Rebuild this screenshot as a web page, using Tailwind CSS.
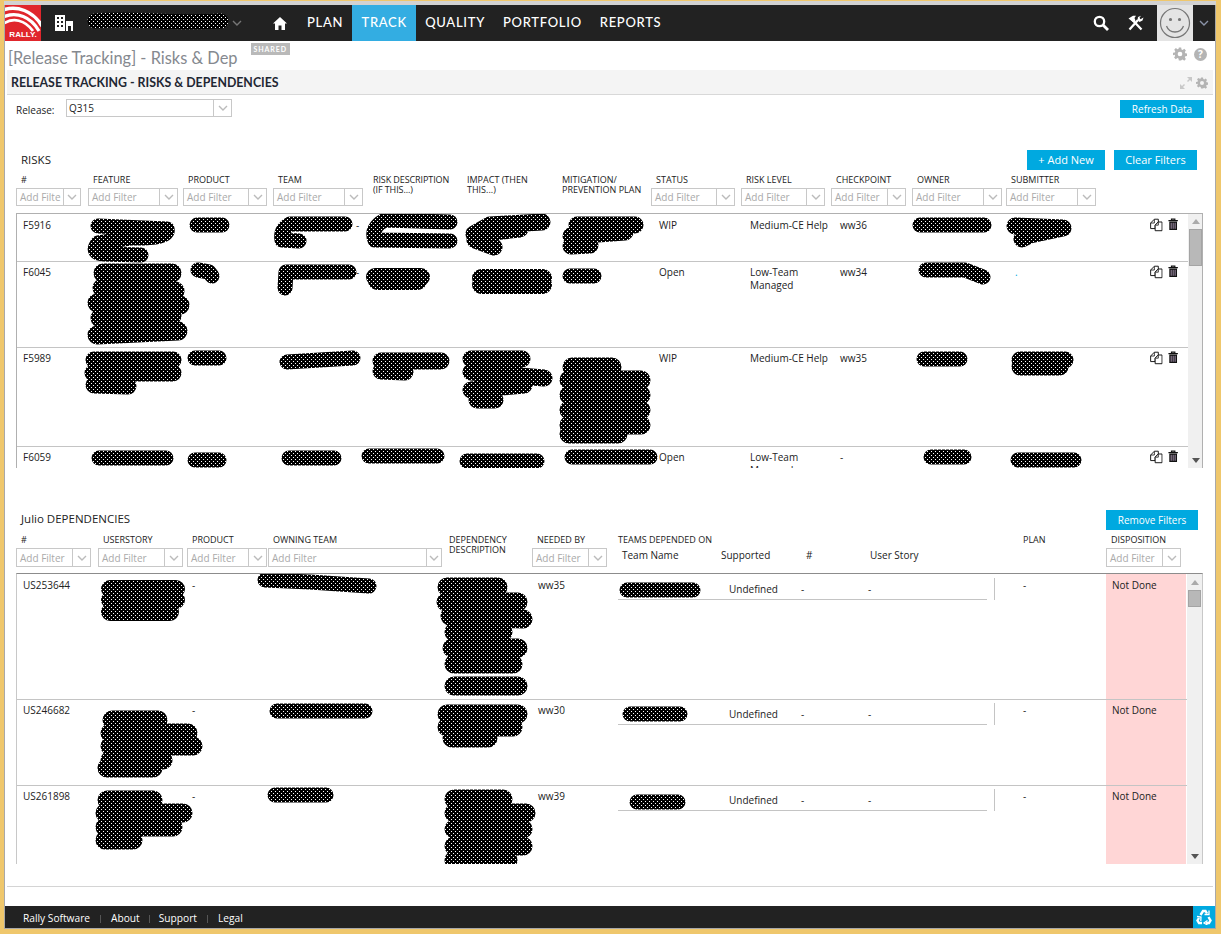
<!DOCTYPE html>
<html>
<head>
<meta charset="utf-8">
<script src="https://cdn.jsdelivr.net/npm/@tailwindcss/browser@4"></script>
</head>
<body class="m-0 overflow-hidden bg-[#efc76c]">
<svg class="absolute w-0 h-0">
  <defs>
    <symbol id="chev" viewBox="0 0 10 6"><path d="M1 1l4 4 4-4" fill="none" stroke="currentColor" stroke-width="1.4"/></symbol>
    <symbol id="gear" viewBox="0 0 24 24"><path fill="currentColor" fill-rule="evenodd" d="M10 1h4l.6 3.200 2 .8L19.300 3.200l2.800 2.800-1.800 2.700.8 2 3.200.6v4l-3.200.6-.8 2 1.800 2.700-2.800 2.800-2.700-1.800-2 .8L14 23h-4l-.6-3.200-2-.8-2.700 1.800-2.800-2.800 1.800-2.700-.8-2L-.1 14v-4l3.200-.6.8-2L2.100 4.700 4.900 1.900l2.700 1.800 2-.8zM12 8a4 4 0 1 0 0 8 4 4 0 0 0 0-8z"/></symbol>
    <symbol id="copy" viewBox="0 0 16 16"><path d="M5.500.7h5v3.500L6.500 8v4.500H.8V5.500z" fill="#fff" stroke="#111" stroke-width="1.200" stroke-linejoin="round"/><path d="M10.500 4.200h4.700v11H6.500V8.200z" fill="#fff" stroke="#111" stroke-width="1.200" stroke-linejoin="round"/><path d="M10.500 4.500v3.700H6.800M5.500 1v4.500H1" fill="none" stroke="#111" stroke-width="1"/></symbol>
    <symbol id="trash" viewBox="0 0 12 14"><path d="M.5 2.500h11M4 2.500V.8h4v1.700" fill="none" stroke="#111" stroke-width="1.300"/><path d="M1.500 3.500h9v10h-9z" fill="#111"/><path d="M3.700 5v7M6 5v7M8.300 5v7" stroke="#b9a3c2" stroke-width="1"/></symbol>
    <symbol id="up" viewBox="0 0 8 5"><path d="M0 5l4-5 4 5z" fill="currentColor"/></symbol>
    <symbol id="down" viewBox="0 0 8 5"><path d="M0 0l4 5 4-5z" fill="currentColor"/></symbol>
  </defs>
</svg>

<div class="relative w-[1221px] h-[934px] overflow-hidden bg-[#efc76c] pt-px pl-[4px] pr-[5px] pb-[5px] font-['Open_Sans',sans-serif] text-[10px] text-[#222]">
  <div class="h-full border-x border-b border-[#a8a8a8] bg-white flex flex-col">
    <div class="h-[4px] bg-[#d2d2d2] -mx-px shrink-0"></div>

    <!-- nav -->
    <nav class="h-[36px] shrink-0 bg-[#222] flex items-center text-white font-['Lato',sans-serif] text-[13px] font-medium tracking-[0.7px]">
      <div class="relative w-[36px] h-[36px] bg-[#e0262c] overflow-hidden shrink-0">
        <svg class="absolute inset-0" width="36" height="36" viewBox="0 0 36 36" fill="none" stroke="#fff"><path d="M-2 5C12 0 28 6 37 21" stroke-width="3.500"/><path d="M-2 12C12 6 26 12 34 26" stroke-width="3.200"/><path d="M-2 19C8 12 20 15 28 26" stroke-width="2.800"/></svg>
        <span class="absolute left-0 right-0 bottom-[1px] text-center text-[8px] leading-[10px] font-black tracking-[0px] font-['Liberation_Sans',sans-serif]">RALLY.</span>
      </div>
      <svg class="ml-[14px] shrink-0" width="18" height="18" viewBox="0 0 18 18"><path fill="#fff" d="M0 1h10v16H0zM11 7h7v10h-2v-5h-3v5h-2z"/><path fill="#222" d="M2 3h2v2H2zM6 3h2v2H6zM2 7h2v2H2zM6 7h2v2H6zM2 11h2v2H2zM6 11h2v2H6z"/></svg>
      <div class="w-[153px] shrink-0"></div>
      <svg class="ml-[6px] text-[#777] shrink-0" width="10" height="6"><use href="#chev"/></svg>
      <svg class="ml-[31px] shrink-0" width="14" height="13" viewBox="0 0 14 13"><path fill="#fff" d="M7 0l7 6.500h-2V13H8.500V8.500h-3V13H2V6.500H0z"/></svg>
      <span class="ml-[20px] -mt-px">PLAN</span>
      <span class="ml-[9px] w-[64px] h-full bg-[#33ade2] flex items-center justify-center pb-px">TRACK</span>
      <span class="ml-[9px] -mt-px">QUALITY</span>
      <span class="ml-[18px] -mt-px">PORTFOLIO</span>
      <span class="ml-[18px] -mt-px">REPORTS</span>
      <div class="flex-1"></div>
      <svg width="16" height="16" viewBox="0 0 16 16"><circle cx="6.500" cy="6.500" r="4.700" fill="none" stroke="#fff" stroke-width="2.300"/><path d="M10 10l5 5" stroke="#fff" stroke-width="2.800"/></svg>
      <svg class="ml-[18px]" width="17" height="16" viewBox="0 0 17 16"><path d="M2.500 14.500L11 5M14.500 14.500L5 4.500" stroke="#fff" stroke-width="2.300" fill="none"/><path d="M1.500 3.500L6 .8h3L7.500 3 8.500 5.500 6.500 7.500zM16.500 2.500l-1 3-3 1.500-2-2 .5-3 3-1.300-1.500 2 1 1.500z" fill="#fff"/></svg>
      <div class="ml-[13px] w-[36px] h-[36px] bg-[#e4e4e4] flex items-center justify-center shrink-0">
        <svg width="32" height="32" viewBox="0 0 32 32" fill="none" stroke="#777" stroke-width="1.200"><circle cx="16" cy="16" r="14.500"/><path d="M7.500 19c3 8 14 8 17 0" stroke-width="1.300"/><circle cx="11.500" cy="12.500" r="1" fill="#777"/><circle cx="20.500" cy="12.500" r="1" fill="#777"/></svg>
      </div>
      <svg class="ml-[6px] mr-[6px] text-[#8a93a8] shrink-0" width="10" height="6"><use href="#chev"/></svg>
    </nav>

    <!-- title -->
    <div class="h-[29px] shrink-0 flex items-start pl-[3px] pr-[8px]">
      <span class="mt-[7px] font-['Lato',sans-serif] text-[16.400px] leading-[20px] text-[#85898f] whitespace-nowrap">[Release Tracking] - Risks &amp; Dep</span>
      <span class="ml-[13px] mt-[2px] h-[12px] px-[3px] bg-[#b9b9b9] text-white text-[7px] leading-[12px] font-bold tracking-[0.9px] font-['Lato',sans-serif]">SHARED</span>
      <div class="flex-1"></div>
      <svg class="mt-[6px] text-[#b4b4b4]" width="14" height="14"><use href="#gear"/></svg>
      <span class="ml-[7px] mt-[7px] w-[13px] h-[13px] rounded-full bg-[#b4b4b4] text-white text-[10px] leading-[13px] font-bold text-center">?</span>
    </div>

    <!-- panel header -->
    <div class="mx-[2px] h-[25px] shrink-0 bg-[#f4f4f4] border-b border-[#d8d8d8] flex items-center pl-[4px] pr-[5px] pt-[2px]">
      <span class="font-['Lato',sans-serif] text-[12.350px] font-bold text-[#1f2733] whitespace-nowrap">RELEASE TRACKING - RISKS &amp; DEPENDENCIES</span>
      <div class="flex-1"></div>
      <svg width="12" height="12" viewBox="0 0 12 12" class="text-[#c8c8c8]"><path fill="currentColor" d="M7 0h5v5l-2-2-2 2-1-1 2-2zM5 12H0V7l2 2 2-2 1 1-2 2z"/></svg>
      <svg class="ml-[4px] text-[#b4b4b4]" width="12" height="12"><use href="#gear"/></svg>
    </div>

    <!-- release row -->
    <div class="h-[55px] shrink-0 flex items-start pl-[11px] pr-[11px]">
      <span class="mt-[8px] w-[50px] text-[10px] leading-[14px]">Release:</span>
      <div class="mt-[4px] w-[166px] h-[18px] border border-[#c8c8c8] flex items-center">
        <span class="flex-1 pl-[2px] text-[10px]">Q315</span>
        <span class="w-[18px] h-full border-l border-[#c8c8c8] flex items-center justify-center text-[#bbb]"><svg width="10" height="6"><use href="#chev"/></svg></span>
      </div>
      <div class="flex-1"></div>
      <button class="mt-[5px] w-[84px] h-[18px] bg-[#00a9e0] text-white text-[10px] font-medium">Refresh Data</button>
    </div>

    <!-- risks header -->
    <div class="h-[22px] shrink-0 flex items-start pl-[16px] pr-[18px]">
      <span class="mt-[2px] text-[11.500px] leading-[16px] text-[#222]">RISKS</span>
      <div class="flex-1"></div>
      <button class="w-[78px] h-[20px] bg-[#00a9e0] text-white text-[11px] font-medium">+ Add New</button>
      <button class="ml-[9px] w-[83px] h-[20px] bg-[#00a9e0] text-white text-[11px] font-medium">Clear Filters</button>
    </div>

    <!-- risks column heads -->
    <div class="h-[41px] shrink-0 pl-[11px] grid grid-cols-[72px_95px_90px_95px_94px_95px_94px_90px_90px_81px_94px_90px] text-[9px] leading-[10px] text-[#222] font-medium">
      <div class="flex flex-col pl-[5px]"><span class="mt-[3px] h-[13px]">#</span><div class="w-[65px] -ml-[5px] h-[18px] border border-[#c8c8c8] flex items-center text-[10px] text-[#aaa]"><span class="flex-1 pl-[3px] w-0 overflow-hidden whitespace-nowrap">Add Filte</span><span class="w-[17px] shrink-0 h-full border-l border-[#c8c8c8] flex items-center justify-center text-[#bbb]"><svg width="10" height="6"><use href="#chev"/></svg></span></div></div>
      <div class="flex flex-col pl-[5px]"><span class="mt-[3px] h-[13px]">FEATURE</span><div class="w-[90px] -ml-[5px] h-[18px] border border-[#c8c8c8] flex items-center text-[10px] text-[#aaa]"><span class="flex-1 pl-[3px]">Add Filter</span><span class="w-[18px] h-full border-l border-[#c8c8c8] flex items-center justify-center text-[#bbb]"><svg width="10" height="6"><use href="#chev"/></svg></span></div></div>
      <div class="flex flex-col pl-[5px]"><span class="mt-[3px] h-[13px]">PRODUCT</span><div class="w-[84px] -ml-[5px] h-[18px] border border-[#c8c8c8] flex items-center text-[10px] text-[#aaa]"><span class="flex-1 pl-[3px]">Add Filter</span><span class="w-[18px] h-full border-l border-[#c8c8c8] flex items-center justify-center text-[#bbb]"><svg width="10" height="6"><use href="#chev"/></svg></span></div></div>
      <div class="flex flex-col pl-[5px]"><span class="mt-[3px] h-[13px]">TEAM</span><div class="w-[90px] -ml-[5px] h-[18px] border border-[#c8c8c8] flex items-center text-[10px] text-[#aaa]"><span class="flex-1 pl-[3px]">Add Filter</span><span class="w-[18px] h-full border-l border-[#c8c8c8] flex items-center justify-center text-[#bbb]"><svg width="10" height="6"><use href="#chev"/></svg></span></div></div>
      <div class="pl-[5px] pt-[3px] whitespace-nowrap tracking-[-0.1px]">RISK DESCRIPTION<br>(IF THIS...)</div>
      <div class="pl-[5px] pt-[3px] whitespace-nowrap">IMPACT (THEN<br>THIS...)</div>
      <div class="pl-[5px] pt-[3px] whitespace-nowrap">MITIGATION/<br>PREVENTION PLAN</div>
      <div class="flex flex-col pl-[5px]"><span class="mt-[3px] h-[13px]">STATUS</span><div class="w-[84px] -ml-[5px] h-[18px] border border-[#c8c8c8] flex items-center text-[10px] text-[#aaa]"><span class="flex-1 pl-[3px]">Add Filter</span><span class="w-[18px] h-full border-l border-[#c8c8c8] flex items-center justify-center text-[#bbb]"><svg width="10" height="6"><use href="#chev"/></svg></span></div></div>
      <div class="flex flex-col pl-[5px]"><span class="mt-[3px] h-[13px]">RISK LEVEL</span><div class="w-[84px] -ml-[5px] h-[18px] border border-[#c8c8c8] flex items-center text-[10px] text-[#aaa]"><span class="flex-1 pl-[3px]">Add Filter</span><span class="w-[18px] h-full border-l border-[#c8c8c8] flex items-center justify-center text-[#bbb]"><svg width="10" height="6"><use href="#chev"/></svg></span></div></div>
      <div class="flex flex-col pl-[5px]"><span class="mt-[3px] h-[13px]">CHECKPOINT</span><div class="w-[75px] -ml-[5px] h-[18px] border border-[#c8c8c8] flex items-center text-[10px] text-[#aaa]"><span class="flex-1 pl-[3px]">Add Filter</span><span class="w-[18px] h-full border-l border-[#c8c8c8] flex items-center justify-center text-[#bbb]"><svg width="10" height="6"><use href="#chev"/></svg></span></div></div>
      <div class="flex flex-col pl-[5px]"><span class="mt-[3px] h-[13px]">OWNER</span><div class="w-[90px] -ml-[5px] h-[18px] border border-[#c8c8c8] flex items-center text-[10px] text-[#aaa]"><span class="flex-1 pl-[3px]">Add Filter</span><span class="w-[18px] h-full border-l border-[#c8c8c8] flex items-center justify-center text-[#bbb]"><svg width="10" height="6"><use href="#chev"/></svg></span></div></div>
      <div class="flex flex-col pl-[5px]"><span class="mt-[3px] h-[13px]">SUBMITTER</span><div class="w-[90px] -ml-[5px] h-[18px] border border-[#c8c8c8] flex items-center text-[10px] text-[#aaa]"><span class="flex-1 pl-[3px]">Add Filter</span><span class="w-[18px] h-full border-l border-[#c8c8c8] flex items-center justify-center text-[#bbb]"><svg width="10" height="6"><use href="#chev"/></svg></span></div></div>
    </div>

    <!-- risks table -->
    <div class="ml-[11px] w-[1187px] h-[255px] shrink-0 border-l border-r border-t border-[#b0b0b0] flex overflow-hidden">
      <div class="w-[1171px] shrink-0 text-[10px] leading-[13px]">
        <div class="h-[48px] border-b border-[#c4c4c4] pt-[5px] grid grid-cols-[71px_95px_90px_95px_94px_95px_94px_90px_90px_81px_94px_90px_82px]">
          <div class="pl-[6px]">F5916</div><div></div><div></div><div class="pl-[83px]">-</div><div></div><div></div><div></div><div class="pl-[8px]">WIP</div><div class="pl-[9px]">Medium-CE Help</div><div class="pl-[9px]">ww36</div><div></div><div></div>
          <div class="flex gap-[5px] pl-[54px] -mt-[2px]"><svg width="16" height="16"><use href="#copy"/></svg><svg width="13" height="15"><use href="#trash"/></svg></div>
        </div>
        <div class="h-[86px] border-b border-[#c4c4c4] pt-[4px] grid grid-cols-[71px_95px_90px_95px_94px_95px_94px_90px_90px_81px_94px_90px_82px]">
          <div class="pl-[6px]">F6045</div><div></div><div></div><div class="pl-[83px]">-</div><div></div><div></div><div></div><div class="pl-[8px]">Open</div><div class="pl-[9px]">Low-Team<br>Managed</div><div class="pl-[9px]">ww34</div><div></div><div class="pl-[9px] text-[#00a9e0]">.</div>
          <div class="flex gap-[5px] pl-[54px] -mt-[2px]"><svg width="16" height="16"><use href="#copy"/></svg><svg width="13" height="15"><use href="#trash"/></svg></div>
        </div>
        <div class="h-[99px] border-b border-[#c4c4c4] pt-[4px] grid grid-cols-[71px_95px_90px_95px_94px_95px_94px_90px_90px_81px_94px_90px_82px]">
          <div class="pl-[6px]">F5989</div><div></div><div></div><div></div><div></div><div></div><div></div><div class="pl-[8px]">WIP</div><div class="pl-[9px]">Medium-CE Help</div><div class="pl-[9px]">ww35</div><div></div><div></div>
          <div class="flex gap-[5px] pl-[54px] -mt-[2px]"><svg width="16" height="16"><use href="#copy"/></svg><svg width="13" height="15"><use href="#trash"/></svg></div>
        </div>
        <div class="h-[21px] pt-[4px] overflow-hidden grid grid-cols-[71px_95px_90px_95px_94px_95px_94px_90px_90px_81px_94px_90px_82px]">
          <div class="pl-[6px]">F6059</div><div></div><div></div><div></div><div></div><div></div><div></div><div class="pl-[8px]">Open</div><div class="pl-[9px]">Low-Team<br>Managed</div><div class="pl-[9px]">-</div><div></div><div></div>
          <div class="flex gap-[5px] pl-[54px] -mt-[2px]"><svg width="16" height="16"><use href="#copy"/></svg><svg width="13" height="15"><use href="#trash"/></svg></div>
        </div>
      </div>
      <div class="w-[15px] shrink-0 bg-[#f0f0f0] flex flex-col items-center text-[#aaa] pt-[5px]">
        <svg width="8" height="5"><use href="#up"/></svg>
        <div class="mt-[5px] w-[13px] h-[37px] bg-[#b8b8b8] border border-[#a4a4a4]"></div>
        <div class="flex-1"></div>
        <svg class="mb-[5px] text-[#555]" width="8" height="5"><use href="#down"/></svg>
      </div>
    </div>

    <!-- dependencies header -->
    <div class="mt-[42px] h-[23px] shrink-0 flex items-start pl-[16px] pr-[17px]">
      <span class="mt-px text-[11.500px] leading-[16px]">Julio DEPENDENCIES</span>
      <div class="flex-1"></div>
      <button class="w-[92px] h-[20px] bg-[#00a9e0] text-white text-[10px] font-medium">Remove Filters</button>
    </div>

    <!-- deps column heads -->
    <div class="h-[40px] shrink-0 pl-[11px] grid grid-cols-[82px_89px_81px_181px_83px_86px_405px_83px_100px] text-[9px] leading-[10px] font-medium">
      <div class="flex flex-col pl-[5px]"><span class="h-[13px] mt-[2px]">#</span><div class="w-[75px] -ml-[5px] h-[19px] border border-[#c8c8c8] flex items-center text-[10px] text-[#aaa]"><span class="flex-1 pl-[3px]">Add Filter</span><span class="w-[18px] h-full border-l border-[#c8c8c8] flex items-center justify-center text-[#bbb]"><svg width="10" height="6"><use href="#chev"/></svg></span></div></div>
      <div class="flex flex-col pl-[5px]"><span class="h-[13px] mt-[2px]">USERSTORY</span><div class="w-[85px] -ml-[5px] h-[19px] border border-[#c8c8c8] flex items-center text-[10px] text-[#aaa]"><span class="flex-1 pl-[3px]">Add Filter</span><span class="w-[18px] h-full border-l border-[#c8c8c8] flex items-center justify-center text-[#bbb]"><svg width="10" height="6"><use href="#chev"/></svg></span></div></div>
      <div class="flex flex-col pl-[5px]"><span class="h-[13px] mt-[2px]">PRODUCT</span><div class="w-[80px] -ml-[5px] h-[19px] border border-[#c8c8c8] flex items-center text-[10px] text-[#aaa]"><span class="flex-1 pl-[3px]">Add Filter</span><span class="w-[18px] h-full border-l border-[#c8c8c8] flex items-center justify-center text-[#bbb]"><svg width="10" height="6"><use href="#chev"/></svg></span></div></div>
      <div class="flex flex-col pl-[5px]"><span class="h-[13px] mt-[2px]">OWNING TEAM</span><div class="w-[174px] -ml-[5px] h-[19px] border border-[#c8c8c8] flex items-center text-[10px] text-[#aaa]"><span class="flex-1 pl-[3px]">Add Filter</span><span class="w-[15px] h-full border-l border-[#c8c8c8] flex items-center justify-center text-[#bbb]"><svg width="10" height="6"><use href="#chev"/></svg></span></div></div>
      <div class="pt-[2px] whitespace-nowrap">DEPENDENCY<br>DESCRIPTION</div>
      <div class="flex flex-col"><span class="h-[13px] mt-[2px] pl-[5px]">NEEDED BY</span><div class="w-[75px] h-[19px] border border-[#c8c8c8] flex items-center text-[10px] text-[#aaa]"><span class="flex-1 pl-[3px]">Add Filter</span><span class="w-[18px] h-full border-l border-[#c8c8c8] flex items-center justify-center text-[#bbb]"><svg width="10" height="6"><use href="#chev"/></svg></span></div></div>
      <div class="pt-[2px]">TEAMS DEPENDED ON
        <div class="mt-[4px] grid grid-cols-[99px_85px_64px_120px] pl-[4px] text-[10px] leading-[13px] font-normal"><span>Team Name</span><span>Supported</span><span>#</span><span>User Story</span></div>
      </div>
      <div class="pt-[2px]">PLAN</div>
      <div class="flex flex-col"><span class="h-[13px] mt-[2px] pl-[5px]">DISPOSITION</span><div class="w-[75px] h-[19px] border border-[#c8c8c8] flex items-center text-[10px] text-[#aaa]"><span class="flex-1 pl-[3px]">Add Filter</span><span class="w-[18px] h-full border-l border-[#c8c8c8] flex items-center justify-center text-[#bbb]"><svg width="10" height="6"><use href="#chev"/></svg></span></div></div>
    </div>

    <!-- deps table -->
    <div class="ml-[11px] w-[1187px] h-[291px] shrink-0 border-l border-r border-t border-[#8c8c8c] border-l-[#c8c8c8] border-r-[#c8c8c8] flex overflow-hidden">
      <div class="w-[1170px] shrink-0 text-[10px] leading-[13px]">
        <div class="h-[126px] border-b border-[#c4c4c4] grid grid-cols-[86px_89px_78px_175px_93px_80px_405px_83px_80px]">
          <div class="pl-[6px] pt-[5px]">US253644</div><div></div><div class="pt-[5px]">-</div><div></div><div></div><div class="pt-[5px]">ww35</div>
          <div class="pt-[4px]"><div class="w-[377px] flex"><div class="w-[370px] h-[22px] border-b border-[#c4c4c4] grid grid-cols-[111px_72px_67px_100px] pt-[5px]"><span></span><span>Undefined</span><span>-</span><span>-</span></div><div class="ml-[7px] h-[22px] border-l border-[#c4c4c4]"></div></div></div>
          <div class="pt-[5px]">-</div>
          <div class="bg-[#ffd6d6] pl-[6px] pt-[5px]">Not Done</div>
        </div>
        <div class="h-[86px] border-b border-[#c4c4c4] grid grid-cols-[86px_89px_78px_175px_93px_80px_405px_83px_80px]">
          <div class="pl-[6px] pt-[4px]">US246682</div><div></div><div class="pt-[4px]">-</div><div></div><div></div><div class="pt-[4px]">ww30</div>
          <div class="pt-[3px]"><div class="w-[377px] flex"><div class="w-[370px] h-[22px] border-b border-[#c4c4c4] grid grid-cols-[111px_72px_67px_100px] pt-[5px]"><span></span><span>Undefined</span><span>-</span><span>-</span></div><div class="ml-[7px] h-[22px] border-l border-[#c4c4c4]"></div></div></div>
          <div class="pt-[4px]">-</div>
          <div class="bg-[#ffd6d6] pl-[6px] pt-[4px]">Not Done</div>
        </div>
        <div class="h-[78px] grid grid-cols-[86px_89px_78px_175px_93px_80px_405px_83px_80px]">
          <div class="pl-[6px] pt-[4px]">US261898</div><div></div><div class="pt-[4px]">-</div><div></div><div></div><div class="pt-[4px]">ww39</div>
          <div class="pt-[3px]"><div class="w-[377px] flex"><div class="w-[370px] h-[22px] border-b border-[#c4c4c4] grid grid-cols-[111px_72px_67px_100px] pt-[5px]"><span></span><span>Undefined</span><span>-</span><span>-</span></div><div class="ml-[7px] h-[22px] border-l border-[#c4c4c4]"></div></div></div>
          <div class="pt-[4px]">-</div>
          <div class="bg-[#ffd6d6] pl-[6px] pt-[4px]">Not Done</div>
        </div>
      </div>
      <div class="w-[15px] shrink-0 bg-[#f0f0f0] flex flex-col items-center pt-[6px] text-[#aaa]">
        <svg width="8" height="5"><use href="#up"/></svg>
        <div class="mt-[5px] w-[13px] h-[17px] bg-[#b8b8b8] border border-[#a4a4a4]"></div>
        <div class="flex-1"></div>
        <svg class="mb-[5px] text-[#555]" width="8" height="5"><use href="#down"/></svg>
      </div>
    </div>

    <div class="mt-[22px] mx-[2px] h-px shrink-0 bg-[#d4d4d4]"></div>
    <div class="flex-1"></div>

    <!-- footer -->
    <footer class="h-[22px] shrink-0 bg-[#222] flex items-center text-white text-[10.200px] pl-[18px]">
      <span class="pt-[3px] whitespace-nowrap">Rally Software</span><span class="mx-[10px] mt-[3px] h-[8px] w-px bg-[#555]"></span><span class="pt-[3px]">About</span><span class="mx-[9px] mt-[3px] h-[8px] w-px bg-[#555]"></span><span class="pt-[3px]">Support</span><span class="mx-[10px] mt-[3px] h-[8px] w-px bg-[#555]"></span><span class="pt-[3px]">Legal</span>
      <div class="flex-1"></div>
      <div class="w-[22px] h-full bg-[#00a9e0] flex items-center justify-center">
        <svg width="16" height="16" viewBox="0 0 16 16" fill="none" stroke="#fff" stroke-width="2.400"><path d="M4.500 6L7 2h2.500L11 4.500M12.500 8l2 3.500-1.500 2.500H10M6 14H3L1.500 11.500 3 9"/><path d="M8.500 5.500h4.500V1.500M1 7.500l4 .5-.2 4M11.500 11.500L8 14l3.500 2" stroke-width="1.300"/></svg>
      </div>
    </footer>
  </div>

  <!-- redaction scribbles over the data -->
  <svg class="absolute left-0 top-0 pointer-events-none" width="1221" height="934" viewBox="0 0 1221 934" fill="none" stroke-linecap="round" stroke-linejoin="round">
    <defs>
      <pattern id="dots" width="4" height="4" patternUnits="userSpaceOnUse"><rect width="4" height="4" fill="#000"/><rect x="1" y="1" width="1" height="1" fill="#fff" shape-rendering="crispEdges"/><rect x="3" y="3" width="1" height="1" fill="#fff" shape-rendering="crispEdges"/></pattern>
      <clipPath id="c1"><rect x="17" y="214" width="1170" height="254"/></clipPath>
      <clipPath id="c2"><rect x="17" y="574" width="1170" height="290"/></clipPath>
    </defs>
    <path stroke="url(#dots)" stroke-width="15" d="M95 21C130 17 165 24 221 21"/>
    <g clip-path="url(#c1)" stroke="url(#dots)" stroke-width="15">
      <path d="M98 226L167 229Q170 239 130 238L98 243Q90 254 105 254L141 255"/>
      <path d="M197 225H222"/>
      <path d="M345 224L290 224Q280 230 282 240L299 241"/>
      <path d="M450 222L385 220Q370 228 375 240L450 241"/>
      <path stroke-width="17" d="M542 222L490 225L474 234L520 229M475 240L494 247"/>
      <path stroke-width="17" d="M577 225H635M571 236L625 232M571 246L590 245"/>
      <path d="M920 225H984"/>
      <path stroke-width="17" d="M1015 226L1063 228L1030 235L1022 239"/>
      <path stroke-width="19" d="M103 273H172M102 288L175 291M97 303L180 305M100 318L172 316M97 335L178 331"/>
      <path d="M198 270L209 272L212 276"/>
      <path d="M286 272H349M286 272L285 288"/>
      <path stroke-width="18" d="M375 277H421M377 281H418"/>
      <path stroke-width="18" d="M481 278H543M481 285H543"/>
      <path d="M570 276H594"/>
      <path d="M926 270L965 270L983 277"/>
      <path stroke-width="17" d="M94 360H173M93 373H173M94 385L128 386"/>
      <path d="M195 358H219"/>
      <path d="M287 362L353 358"/>
      <path stroke-width="17" d="M381 361H441M381 371L405 372"/>
      <path stroke-width="17" d="M471 359H522M471 372L544 378M471 390L524 385M477 400H495"/>
      <path stroke-width="19" d="M572 367H612M569 380H641M569 395H641M569 410H641M569 425H641M569 434H618"/>
      <path d="M924 359H960"/>
      <path stroke-width="17" d="M1020 360H1065M1020 367H1060"/>
      <path d="M99 458H166"/><path d="M195 460H219"/><path d="M289 458H334"/><path d="M369 456H437"/><path d="M467 461H537"/><path d="M572 457H650"/><path d="M931 457H964"/><path d="M1018 460H1074"/>
    </g>
    <g clip-path="url(#c2)" stroke="url(#dots)" stroke-width="15">
      <path stroke-width="18" d="M110 589H176M110 600H176M110 612H170"/>
      <path d="M265 580L310 582L369 586"/>
      <path stroke-width="19" d="M447 587H498M446 602H518M450 616L523 619M454 632H503M452 648H518M454 664H513M454 686H518"/>
      <path d="M627 590H693"/>
      <path stroke-width="19" d="M112 720H158M110 733H188M110 746H193M110 760H163M107 768H153"/>
      <path d="M277 711H365"/>
      <path stroke-width="19" d="M447 714H518M447 727H513M452 738H488"/>
      <path d="M630 714H680"/>
      <path stroke-width="19" d="M107 800H153M105 813H183M105 827H173M105 840H133"/>
      <path d="M275 795H326"/>
      <path stroke-width="19" d="M454 799H503M454 813H526M454 829H523M454 846H523M454 860H508"/>
      <path d="M637 802H678"/>
    </g>
  </svg>
</div>
</body>
</html>
